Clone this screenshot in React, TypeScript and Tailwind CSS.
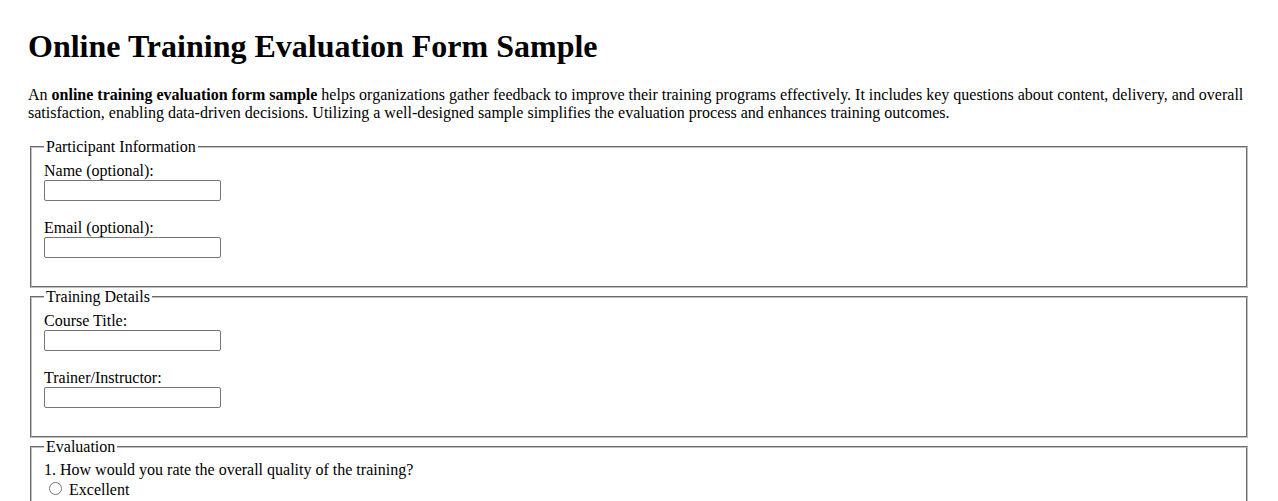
import React from "react";

const inputCls =
  "w-[177px] h-[21px] border border-[#767676] rounded-[2px] px-[2px] py-[1px] text-[13.333px] bg-white align-baseline [font-family:Arial,'Liberation_Sans',sans-serif]";
const fsCls =
  "mx-[2px] px-[12px] pt-[5.6px] pb-[10px] border-2 [border-style:groove] border-[#c0c0c0] min-w-0";
const legendCls = "px-[2px]";
const radioCls = "ml-[5px] mr-[3px] mt-[3px] align-baseline";

function Radio({ name, label }: { name: string; label: string }) {
  return (
    <>
      <label>
        <input type="radio" name={name} className={radioCls} /> {label}
      </label>
      <br />
    </>
  );
}

export default function App() {
  return (
    <div className="bg-white text-black text-[16px] leading-[normal] [font-family:'Liberation_Serif','Times_New_Roman',serif] px-[28px] pt-[28px] pb-[28px]">
      <h1 className="text-[32px] font-bold mb-[21.44px]">Online Training Evaluation Form Sample</h1>
      <p className="mb-[16px]">
        An <b className="font-bold">online training evaluation form sample</b> helps organizations gather feedback to
        improve their training programs effectively. It includes key questions about content, delivery, and overall
        satisfaction, enabling data-driven decisions. Utilizing a well-designed sample simplifies the evaluation process
        and enhances training outcomes.
      </p>
      <form>
        <fieldset className={fsCls}>
          <legend className={legendCls}>Participant Information</legend>
          <label>Name (optional):</label>
          <br />
          <input type="text" className={inputCls} />
          <br />
          <br />
          <label>Email (optional):</label>
          <br />
          <input type="email" className={inputCls} />
          <br />
          <br />
        </fieldset>
        <fieldset className={fsCls}>
          <legend className={legendCls}>Training Details</legend>
          <label>Course Title:</label>
          <br />
          <input type="text" className={inputCls} />
          <br />
          <br />
          <label>Trainer/Instructor:</label>
          <br />
          <input type="text" className={inputCls} />
          <br />
          <br />
        </fieldset>
        <fieldset className={fsCls}>
          <legend className={legendCls}>Evaluation</legend>
          <p>1. How would you rate the overall quality of the training?</p>
          <Radio name="q1" label="Excellent" />
          <Radio name="q1" label="Good" />
          <Radio name="q1" label="Average" />
          <Radio name="q1" label="Poor" />
          <br />
          <p>2. Was the content relevant to your needs?</p>
          <Radio name="q2" label="Yes" />
          <Radio name="q2" label="Somewhat" />
          <Radio name="q2" label="No" />
          <br />
        </fieldset>
      </form>
    </div>
  );
}
